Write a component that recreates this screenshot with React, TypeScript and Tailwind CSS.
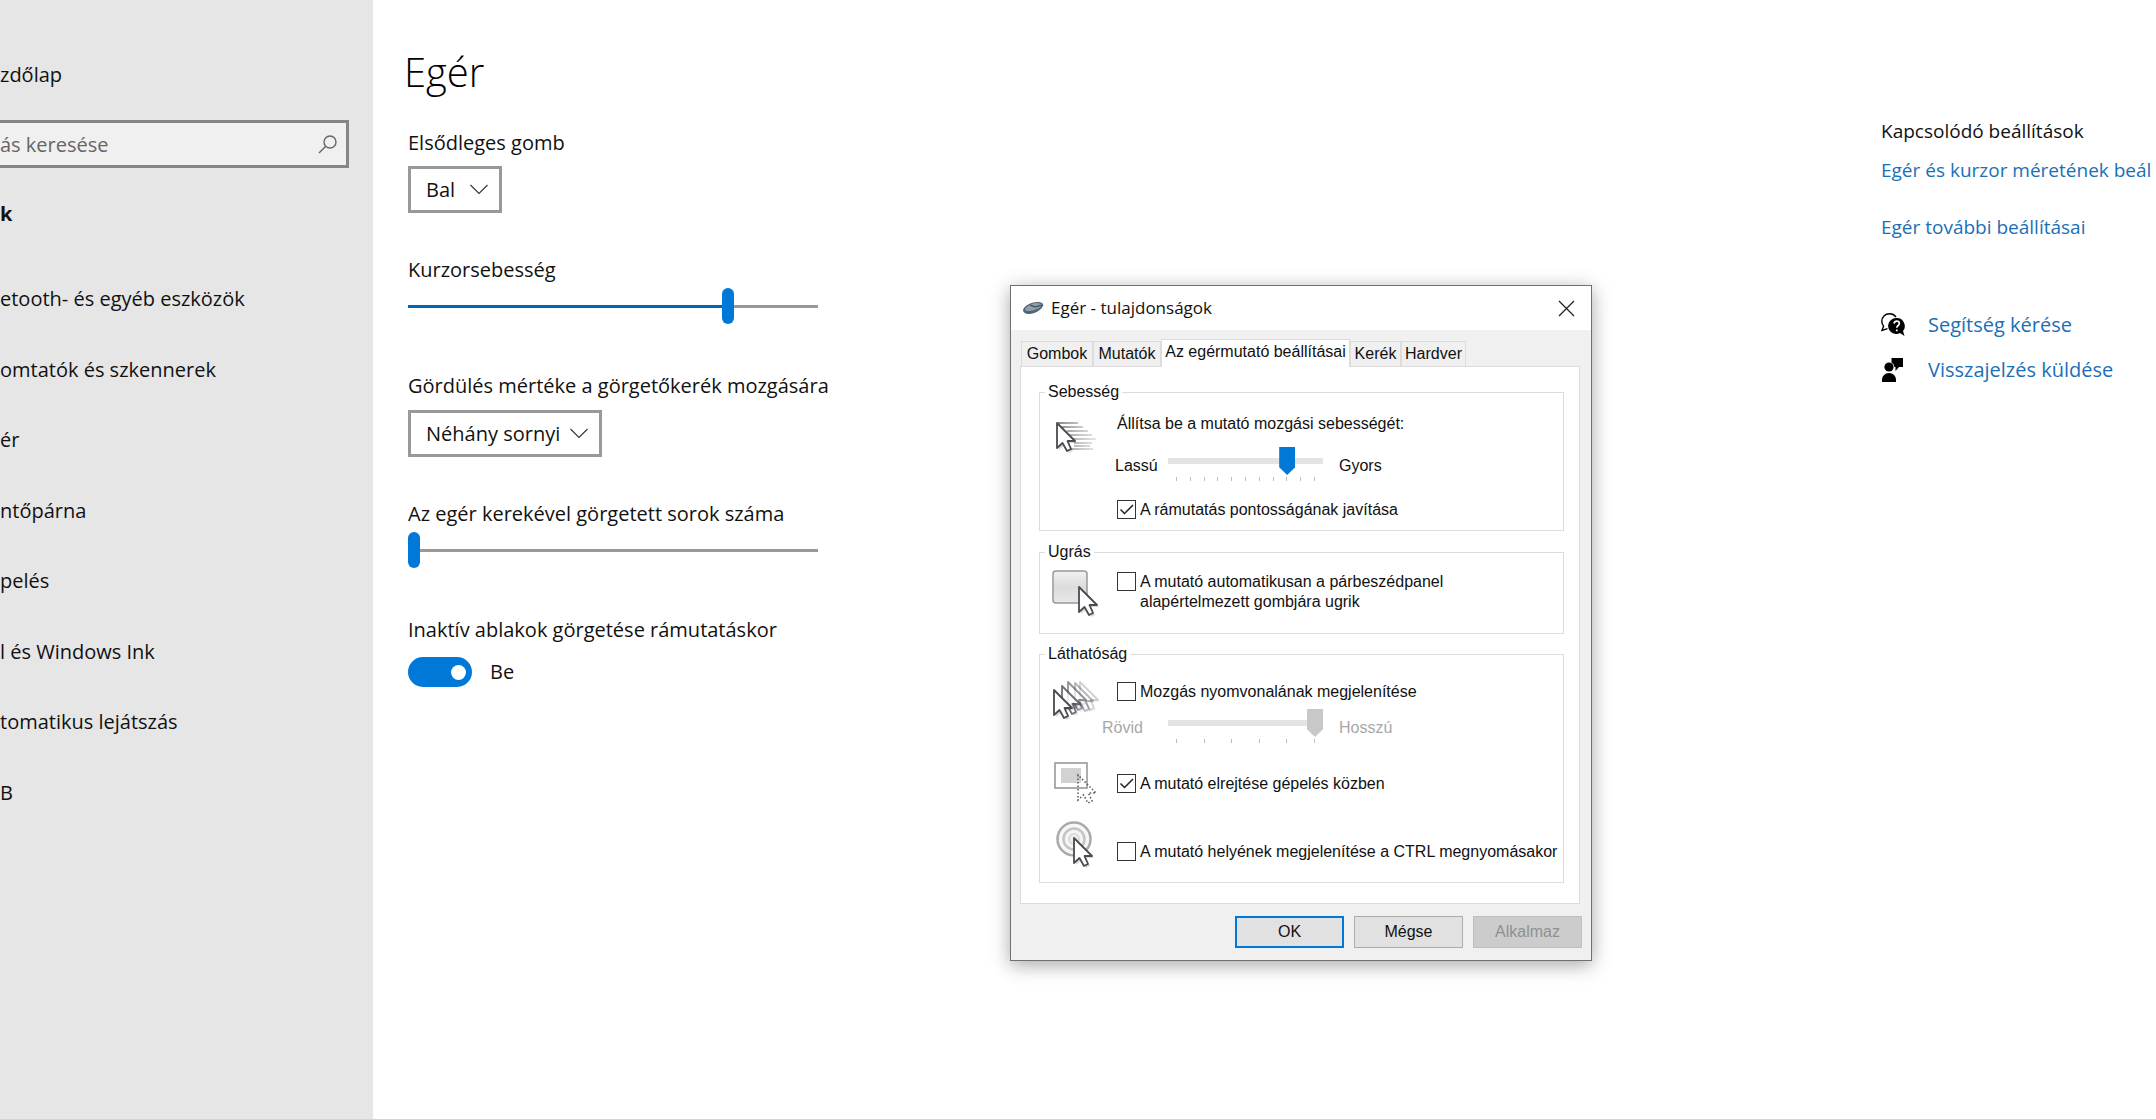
import React from "react";

const navItems = [
  "etooth- és egyéb eszközök",
  "omtatók és szkennerek",
  "ér",
  "ntőpárna",
  "pelés",
  "l és Windows Ink",
  "tomatikus lejátszás",
  "B",
];

const sliderClass =
  "block h-9 w-full appearance-none bg-transparent outline-none [&::-webkit-slider-thumb]:h-9 [&::-webkit-slider-thumb]:w-3 [&::-webkit-slider-thumb]:appearance-none [&::-webkit-slider-thumb]:rounded-full [&::-webkit-slider-thumb]:bg-[#0078d7] bg-[length:100%_3px] bg-center bg-no-repeat";

const Chevron = () => (
  <svg className="pointer-events-none absolute right-3.5 top-[18px]" width="18" height="11" viewBox="0 0 18 11" fill="none" stroke="#333" strokeWidth="1.1">
    <path d="M0.5 1 9 9.5 17.5 1" />
  </svg>
);

const arrow = "M0 0V25L5.5 20 10 28 14 26 10.5 18H18Z";

const Arrow = ({ x, y, opacity = 1 }: { x: number; y: number; opacity?: number }) => (
  <g transform={`translate(${x} ${y})`} opacity={opacity}>
    <path d={arrow} transform="translate(2 2)" fill="#000" opacity="0.15" />
    <path d={arrow} fill="#fff" stroke="#4d4852" strokeWidth="1.8" strokeLinejoin="round" />
  </g>
);

const SpeedIcon = () => (
  <svg className="shrink-0" width="52" height="52" viewBox="0 0 52 52">
    <g strokeWidth="1.6">
      <path d="M8 11H28M12 15H33M17 19H38M20 23H42M23 27H46M24 31H42M24 34H40M19 37H43" stroke="url(#trail)" />
    </g>
    <defs>
      <linearGradient id="trail" x1="9" x2="46" y1="0" y2="0" gradientUnits="userSpaceOnUse">
        <stop stopColor="#666" />
        <stop offset="1" stopColor="#aaa" stopOpacity="0.4" />
      </linearGradient>
    </defs>
    <Arrow x={7} y={11} />
  </svg>
);

const SnapIcon = () => (
  <svg className="shrink-0" width="52" height="52" viewBox="0 0 52 52">
    <defs>
      <linearGradient id="button" x1="0" x2="0" y1="0" y2="1">
        <stop stopColor="#f2f2f2" />
        <stop offset="0.5" stopColor="#dcdcdc" />
        <stop offset="1" stopColor="#e8e8e8" />
      </linearGradient>
    </defs>
    <rect x="3" y="3" width="34" height="32" rx="3" fill="url(#button)" stroke="#999" strokeWidth="1.5" />
    <Arrow x={29} y={19} />
  </svg>
);

const TrailsIcon = () => (
  <svg className="shrink-0" width="52" height="52" viewBox="0 0 52 52">
    <Arrow x={30} y={4} opacity={0.25} />
    <Arrow x={25} y={5} opacity={0.4} />
    <Arrow x={18} y={4} opacity={0.6} />
    <Arrow x={12} y={8} opacity={0.8} />
    <Arrow x={4} y={12} />
  </svg>
);

const HideIcon = () => (
  <svg className="shrink-0" width="52" height="52" viewBox="0 0 52 52">
    <rect x="5" y="5" width="32" height="25" fill="#fff" stroke="#999" strokeWidth="1.6" />
    <rect x="11" y="10" width="20" height="15" fill="#d2d2d2" />
    <path d={arrow} transform="translate(28 17)" fill="none" stroke="#555" strokeWidth="1.5" strokeDasharray="1.5 2" />
  </svg>
);

const LocateIcon = () => (
  <svg className="shrink-0" width="52" height="52" viewBox="0 0 52 52">
    <circle cx="24" cy="21" r="16.5" fill="#f7f7f7" stroke="#aaa" strokeWidth="2.5" />
    <circle cx="24" cy="21" r="10.5" fill="#f4f4f4" stroke="#c4c4c4" strokeWidth="2.5" />
    <circle cx="24" cy="21" r="5" fill="#eee" stroke="#dadada" strokeWidth="2" />
    <Arrow x={24} y={20} />
  </svg>
);

const Check = ({ id, checked, children }: { id: string; checked?: boolean; children: React.ReactNode }) => (
  <div className="ml-[15px] flex items-start gap-1">
    <span className="relative size-[19px] shrink-0">
      <input id={id} type="checkbox" defaultChecked={checked} className="peer block size-[19px] appearance-none border border-[#333] bg-white" />
      <svg className="pointer-events-none absolute inset-0 hidden peer-checked:block" width="19" height="19" viewBox="0 0 19 19" fill="none" stroke="#222" strokeWidth="1.5">
        <path d="M3.5 9.5 7.5 13.5 16 5" />
      </svg>
    </span>
    <label htmlFor={id} className="whitespace-pre-line">{children}</label>
  </div>
);

const thumbClass =
  "[&::-webkit-slider-thumb]:h-7 [&::-webkit-slider-thumb]:w-4 [&::-webkit-slider-thumb]:appearance-none [&::-webkit-slider-thumb]:[clip-path:polygon(0_0,100%_0,100%_72%,50%_100%,0_72%)]";

const TrackBar = ({ label, ticks, value, disabled }: { label: string; ticks: number; value: number; disabled?: boolean }) => (
  <div className="w-[155px]">
    <input
      type="range"
      aria-label={label}
      min={0}
      max={ticks - 1}
      defaultValue={value}
      disabled={disabled}
      className={`block h-7 w-full appearance-none bg-[linear-gradient(#e4e4e4,#e4e4e4)] bg-[length:100%_6px] bg-[position:0_11px] bg-no-repeat outline-none ${thumbClass} ${disabled ? "[&::-webkit-slider-thumb]:bg-[#c8c8c8]" : "[&::-webkit-slider-thumb]:bg-[#0078d7]"}`}
    />
    <div className="mt-0.5 flex justify-between px-2">
      {Array.from({ length: ticks }, (_, i) => (
        <span key={i} className="h-1 w-px bg-[#bdbdbd]" />
      ))}
    </div>
  </div>
);

const MouseDialog = () => {
  const tab = "border border-b-0 border-[#dcdcdc] h-[25px] bg-[#f0f0f0] text-center";
  return (
    <div role="dialog" aria-labelledby="dialog-title" className="absolute left-[1010px] top-[285px] w-[582px] border border-[#707070] bg-[#f0f0f0] font-['Liberation_Sans',Arial,sans-serif] text-base leading-5 text-[#111] shadow-[0_4px_18px_rgba(0,0,0,0.35)]">
      <div className="flex h-11 items-center bg-white pl-[11px] pr-4">
        <svg width="23" height="14" viewBox="0 0 23 14">
          <path d="M1 9C2 5 9 1 15 1c5 0 7 2 6 4-2 4-8 8-14 8-4 0-6-2-6-4Z" fill="#536472" />
          <path d="M3 8C6 4 11 2 15 2c3 0 5 1 5 2-3 4-9 6-14 6-2 0-3-1-3-2Z" fill="#8fa0ad" />
          <path d="M8 4 13 6M13 6 20 4" stroke="#34424d" strokeWidth="1.2" />
        </svg>
        <h2 id="dialog-title" className="ml-1.5 flex-1 font-['Open_Sans','Noto_Sans',sans-serif] text-[17px] leading-6">Egér - tulajdonságok</h2>
        <button aria-label="Bezárás">
          <svg width="17" height="17" viewBox="0 0 17 17" stroke="#222" strokeWidth="1.3">
            <path d="M1 1 16 16M16 1 1 16" />
          </svg>
        </button>
      </div>
      <div className="px-[9px] pb-3 pt-[9px]">
        <div role="tablist" className="ml-px flex items-end">
          <button role="tab" className={`${tab} w-[72px]`}>Gombok</button>
          <button role="tab" className={`${tab} w-[68px]`}>Mutatók</button>
          <button role="tab" aria-selected="true" className="relative -mb-px h-7 w-[189px] border border-b-0 border-[#dcdcdc] bg-white pb-1">Az egérmutató beállításai</button>
          <button role="tab" className={`${tab} w-[51px]`}>Kerék</button>
          <button role="tab" className={`${tab} w-[65px]`}>Hardver</button>
        </div>
        <div role="tabpanel" className="mr-0.5 border border-[#dcdcdc] bg-white pb-5 pl-[18px] pr-[15px] pt-[15px]">
          <fieldset className="h-[149px] border border-[#dcdcdc] pl-[5px]">
            <legend className="px-[3px]">Sebesség</legend>
            <div className="flex pl-[5px]">
              <div className="pt-2.5"><SpeedIcon /></div>
              <div className="pt-3">
                <p className="ml-[15px]">Állítsa be a mutató mozgási sebességét:</p>
                <div className="mt-[13px] flex">
                  <span className="w-[66px] pl-[13px] pt-[9px]">Lassú</span>
                  <TrackBar label="Mutató sebessége" ticks={11} value={8} />
                  <span className="pl-4 pt-[9px]">Gyors</span>
                </div>
                <div className="mt-[19px]">
                  <Check id="precision" checked>A rámutatás pontosságának javítása</Check>
                </div>
              </div>
            </div>
          </fieldset>
          <fieldset className="mt-[11px] h-[92px] border border-[#dcdcdc] pl-[5px]">
            <legend className="px-[3px]">Ugrás</legend>
            <div className="flex pl-[5px]">
              <div className="pt-1.5"><SnapIcon /></div>
              <div className="pt-2.5">
                <Check id="snap">{"A mutató automatikusan a párbeszédpanel\nalapértelmezett gombjára ugrik"}</Check>
              </div>
            </div>
          </fieldset>
          <fieldset className="mt-2.5 h-[239px] border border-[#dcdcdc] pl-[5px]">
            <legend className="px-[3px]">Láthatóság</legend>
            <div className="flex pl-[5px] pt-3.5">
              <TrailsIcon />
              <div className="pt-1">
                <Check id="trails">Mozgás nyomvonalának megjelenítése</Check>
                <div className="mt-[7px] flex text-[#a8a8a8]">
                  <span className="w-[66px] pt-[9px]">Rövid</span>
                  <TrackBar label="Nyomvonal hossza" ticks={6} value={5} disabled />
                  <span className="pl-4 pt-[9px]">Hosszú</span>
                </div>
              </div>
            </div>
            <div className="mt-[15px] flex items-center pl-[5px]">
              <HideIcon />
              <Check id="hide" checked>A mutató elrejtése gépelés közben</Check>
            </div>
            <div className="mt-2 flex pl-[5px]">
              <LocateIcon />
              <div className="pt-6">
                <Check id="locate">A mutató helyének megjelenítése a CTRL megnyomásakor</Check>
              </div>
            </div>
          </fieldset>
        </div>
        <div className="mt-3 flex justify-end gap-2.5">
          <button className="h-8 w-[109px] border-2 border-[#0078d7] bg-[#e1e1e1]">OK</button>
          <button className="h-8 w-[109px] border border-[#adadad] bg-[#e1e1e1]">Mégse</button>
          <button disabled className="h-8 w-[109px] border border-[#bfbfbf] bg-[#ccc] text-[#909090]">Alkalmaz</button>
        </div>
      </div>
    </div>
  );
};

const App = () => {
  return (
    <div className="relative flex min-h-screen overflow-hidden bg-white font-['Open_Sans','Noto_Sans',sans-serif] text-xl leading-7 text-[#111]">
      <aside className="w-[373px] shrink-0 bg-[#e6e6e6] pt-[61px]">
        <a href="#home" className="block">zdőlap</a>
        <div className="relative mr-6 mt-[31px]">
          <input type="text" aria-label="Beállítás keresése" placeholder="ás keresése" className="block h-12 w-full border-[3px] border-l-0 border-[#858585] bg-[#f0f0f0] outline-none placeholder:text-[#666]" />
          <svg className="absolute right-3 top-[15px]" width="19" height="19" viewBox="0 0 19 19" fill="none" stroke="#666" strokeWidth="1.4">
            <circle cx="12" cy="7" r="6" />
            <path d="M7.5 11.5 1 18" />
          </svg>
        </div>
        <h2 className="mt-8 font-bold">k</h2>
        <nav className="mt-9">
          <ul className="grid h-[564px] auto-rows-fr">
            {navItems.map((item) => (
              <li key={item} className="flex items-center">
                <a href="#nav">{item}</a>
              </li>
            ))}
          </ul>
        </nav>
      </aside>
      <main className="min-w-0 flex-1 pl-[35px] pt-11">
        <h1 className="-ml-1 text-[40px] font-light leading-[56px] text-black">Egér</h1>
        <div className="mt-[29px] w-[410px]">
          <label htmlFor="primary" className="block whitespace-nowrap">Elsődleges gomb</label>
          <div className="relative mt-[9px] w-[94px]">
            <select id="primary" className="block h-[47px] w-full appearance-none border-[3px] border-[#999] bg-white pl-[15px] outline-none">
              <option>Bal</option>
            </select>
            <Chevron />
          </div>
          <label htmlFor="speed" className="mt-[43px] block">Kurzorsebesség</label>
          <input id="speed" type="range" min={1} max={20} defaultValue={16} className={`${sliderClass} mt-1 bg-[linear-gradient(to_right,#0067b8_78%,#999_78%)]`} />
          <label htmlFor="scroll" className="mt-12 block whitespace-nowrap">Gördülés mértéke a görgetőkerék mozgására</label>
          <div className="relative mt-2.5 w-[194px]">
            <select id="scroll" className="block h-[47px] w-full appearance-none border-[3px] border-[#999] bg-white pl-[15px] outline-none">
              <option>Néhány sornyi</option>
            </select>
            <Chevron />
          </div>
          <label htmlFor="lines" className="mt-[43px] block whitespace-nowrap">Az egér kerekével görgetett sorok száma</label>
          <input id="lines" type="range" min={1} max={100} defaultValue={1} className={`${sliderClass} mt-1 bg-[linear-gradient(#999,#999)]`} />
          <label htmlFor="inactive" className="mt-12 block whitespace-nowrap">Inaktív ablakok görgetése rámutatáskor</label>
          <div className="mt-[13px] flex items-center gap-[18px]">
            <input id="inactive" type="checkbox" role="switch" defaultChecked className="flex h-[30px] w-16 appearance-none items-center justify-end rounded-full bg-[#0078d7] pr-1.5 after:size-[15px] after:rounded-full after:bg-white" />
            <span>Be</span>
          </div>
        </div>
      </main>
      <aside className="w-[275px] shrink-0 whitespace-nowrap pt-[117px]">
        <h2 className="text-[19px]">Kapcsolódó beállítások</h2>
        <a href="#size" className="mt-[11px] block text-[19px] text-[#1a6fb8]">Egér és kurzor méretének beál</a>
        <a href="#more" className="mt-[29px] block text-[19px] text-[#1a6fb8]">Egér további beállításai</a>
        <a href="#help" className="mt-[70px] flex items-center gap-[23px] text-[#1a6fb8]">
          <svg width="24" height="24" viewBox="0 0 24 24">
            <path d="M15 4C13.500 2 11 .8 8.500 .8 4 .8 .8 4 .8 8.200c0 2 .8 3.600 1.800 4.900L.9 17.500l5.600-1.800" fill="none" stroke="#000" strokeWidth="1.400" />
            <path d="M15.500 5a8 8 0 1 0 3.500 15l4.500 3-1.500-5A8 8 0 0 0 15.500 5Z" fill="#000" />
            <path d="M13 10.500c.3-1.600 1.300-2.300 2.700-2.300 1.500 0 2.600.9 2.600 2.200 0 2.200-2.500 2-2.500 4.400M15.800 16.400v1.800" fill="none" stroke="#fff" strokeWidth="1.700" />
          </svg>
          Segítség kérése
        </a>
        <a href="#feedback" className="mt-[17px] flex items-center gap-[23px] text-[#1a6fb8]">
          <svg width="24" height="24" viewBox="0 0 24 24">
            <path d="M10.500 0H22v9h-4l-3.500 4V9h-1A6 6 0 0 0 10.500 4.500Z" fill="#000" />
            <circle cx="8" cy="9" r="4.600" fill="#000" />
            <path d="M1 24v-2c0-4 3-7 7-7s7 3 7 7v2Z" fill="#000" />
          </svg>
          Visszajelzés küldése
        </a>
      </aside>
      <MouseDialog />
    </div>
  );
};

export default App;
